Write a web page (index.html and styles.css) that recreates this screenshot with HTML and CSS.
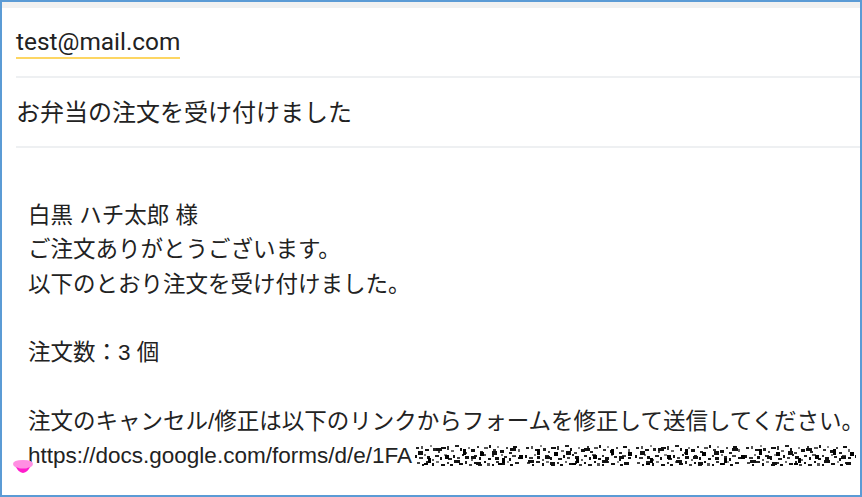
FILE: index.html
```html
<!DOCTYPE html>
<html lang="ja">
<head>
<meta charset="utf-8">
<title>お弁当の注文を受け付けました</title>
<link rel="stylesheet" href="styles.css">
</head>
<body>
<div class="frame">
  <div class="topstrip"></div>
  <div class="content">
    <div class="to-field"><span class="email">test@mail.com</span></div>
    <div class="divider"></div>
    <div class="subject">お弁当の注文を受け付けました</div>
    <div class="divider"></div>
    <div class="body">
      <div class="line">白黒 ハチ太郎 様</div>
      <div class="line">ご注文ありがとうございます。</div>
      <div class="line">以下のとおり注文を受け付けました。</div>
      <div class="line">&nbsp;</div>
      <div class="line">注文数：3 個</div>
      <div class="line">&nbsp;</div>
      <div class="line">注文のキャンセル/修正は以下のリンクからフォームを修正して送信してください。</div>
      <div class="line">https://docs.google.com/forms/d/e/1FA<svg class="noise" width="442" height="26" viewBox="0 0 442 26">
          <defs>
            <pattern id="px" width="110" height="26" patternUnits="userSpaceOnUse">
              <rect x="2" y="4" width="3" height="2" fill="#222"/><rect x="7" y="3" width="2" height="3" fill="#555"/><rect x="11" y="6" width="4" height="2" fill="#111"/><rect x="16" y="2" width="2" height="2" fill="#888"/><rect x="19" y="5" width="3" height="3" fill="#222"/><rect x="24" y="8" width="2" height="2" fill="#444"/><rect x="27" y="4" width="5" height="2" fill="#111"/><rect x="33" y="3" width="2" height="4" fill="#333"/><rect x="37" y="7" width="3" height="2" fill="#666"/><rect x="41" y="2" width="4" height="2" fill="#222"/><rect x="46" y="5" width="2" height="3" fill="#111"/><rect x="50" y="9" width="3" height="2" fill="#444"/><rect x="54" y="4" width="2" height="2" fill="#777"/><rect x="57" y="6" width="4" height="3" fill="#111"/><rect x="63" y="3" width="2" height="2" fill="#333"/><rect x="66" y="8" width="3" height="2" fill="#222"/><rect x="70" y="4" width="4" height="2" fill="#555"/><rect x="75" y="2" width="2" height="3" fill="#111"/><rect x="79" y="6" width="3" height="2" fill="#333"/><rect x="83" y="3" width="2" height="2" fill="#888"/><rect x="86" y="7" width="4" height="3" fill="#111"/><rect x="92" y="4" width="2" height="2" fill="#444"/><rect x="95" y="9" width="3" height="2" fill="#222"/><rect x="99" y="3" width="4" height="2" fill="#111"/><rect x="104" y="6" width="2" height="3" fill="#666"/>
              <rect x="1" y="12" width="2" height="3" fill="#111"/><rect x="5" y="14" width="4" height="2" fill="#333"/><rect x="10" y="11" width="2" height="2" fill="#777"/><rect x="13" y="13" width="3" height="3" fill="#111"/><rect x="18" y="16" width="2" height="2" fill="#555"/><rect x="21" y="12" width="4" height="2" fill="#222"/><rect x="26" y="14" width="2" height="3" fill="#111"/><rect x="30" y="11" width="3" height="2" fill="#888"/><rect x="34" y="15" width="4" height="2" fill="#222"/><rect x="39" y="12" width="2" height="3" fill="#111"/><rect x="43" y="14" width="3" height="2" fill="#444"/><rect x="48" y="11" width="2" height="2" fill="#222"/><rect x="51" y="13" width="4" height="3" fill="#111"/><rect x="57" y="16" width="2" height="2" fill="#666"/><rect x="60" y="12" width="3" height="2" fill="#222"/><rect x="65" y="14" width="2" height="3" fill="#111"/><rect x="68" y="11" width="4" height="2" fill="#555"/><rect x="74" y="15" width="3" height="2" fill="#111"/><rect x="78" y="12" width="2" height="2" fill="#333"/><rect x="81" y="14" width="4" height="3" fill="#111"/><rect x="87" y="11" width="2" height="2" fill="#777"/><rect x="90" y="13" width="3" height="2" fill="#222"/><rect x="95" y="15" width="2" height="3" fill="#111"/><rect x="98" y="12" width="4" height="2" fill="#444"/><rect x="104" y="14" width="3" height="2" fill="#111"/>
              <rect x="3" y="19" width="3" height="2" fill="#444"/><rect x="8" y="21" width="2" height="2" fill="#111"/><rect x="12" y="18" width="4" height="2" fill="#222"/><rect x="18" y="20" width="2" height="3" fill="#111"/><rect x="22" y="18" width="3" height="2" fill="#777"/><rect x="27" y="21" width="4" height="2" fill="#111"/><rect x="33" y="19" width="2" height="2" fill="#333"/><rect x="36" y="21" width="3" height="2" fill="#111"/><rect x="41" y="18" width="2" height="2" fill="#666"/><rect x="45" y="20" width="4" height="2" fill="#111"/><rect x="51" y="18" width="2" height="3" fill="#222"/><rect x="55" y="21" width="3" height="2" fill="#444"/><rect x="60" y="19" width="2" height="2" fill="#111"/><rect x="64" y="21" width="4" height="2" fill="#222"/><rect x="70" y="18" width="2" height="2" fill="#111"/><rect x="73" y="20" width="3" height="3" fill="#555"/><rect x="78" y="21" width="2" height="2" fill="#111"/><rect x="82" y="18" width="3" height="2" fill="#333"/><rect x="87" y="20" width="4" height="2" fill="#111"/><rect x="93" y="18" width="2" height="2" fill="#888"/><rect x="96" y="21" width="3" height="2" fill="#111"/><rect x="101" y="19" width="4" height="2" fill="#222"/>
            </pattern>
            <pattern id="px2" width="74" height="26" patternUnits="userSpaceOnUse">
              <rect x="4" y="8" width="5" height="4" fill="#111"/><rect x="14" y="15" width="3" height="5" fill="#000"/><rect x="22" y="5" width="6" height="3" fill="#111"/><rect x="31" y="12" width="4" height="4" fill="#000"/><rect x="40" y="17" width="6" height="3" fill="#111"/><rect x="49" y="6" width="3" height="6" fill="#000"/><rect x="57" y="13" width="5" height="3" fill="#111"/><rect x="66" y="9" width="4" height="4" fill="#000"/><rect x="10" y="20" width="4" height="2" fill="#000"/><rect x="62" y="19" width="5" height="3" fill="#111"/>
            </pattern>
          </defs>
          <rect x="0" y="0" width="442" height="26" fill="url(#px)"/>
          <rect x="0" y="0" width="442" height="26" fill="url(#px2)"/>
        </svg></div>
    </div>
  </div>
  <svg class="marker" width="22" height="16" viewBox="0 0 22 16">
    <path d="M1 5 Q1 1 11 1 Q21 1 21 5 Q21 9 11 10 Q1 9 1 5 Z" fill="#ff8fe2"/>
    <path d="M4 8 Q11 11 18 8 Q16 13 11 14 Q6 13 4 8 Z" fill="#ff1ccc"/>
  </svg>
</div>
</body>
</html>
```
FILE: styles.css
```css
html, body {
  margin: 0;
  padding: 0;
  background: #ffffff;
}

.frame {
  position: relative;
  box-sizing: border-box;
  width: 862px;
  height: 497px;
  border: 2px solid #5b9bd5;
  background: #ffffff;
  overflow: hidden;
}

.topstrip {
  height: 6px;
  background: #f1f1f1;
}

.content {
  padding-left: 14px;
}

.to-field {
  padding-top: 20px;
  padding-bottom: 17px;
  display: flex;
}

.email {
  font-family: Roboto, "Liberation Sans", sans-serif;
  font-size: 24.4px;
  line-height: 28px;
  color: #222222;
  padding-bottom: 1px;
  border-bottom: 2px solid #fdd663;
}

.divider {
  height: 2px;
  background: #eef0f2;
}

.subject {
  font-family: "Noto Sans CJK JP", sans-serif;
  font-size: 24px;
  line-height: 34px;
  color: #222222;
  padding-top: 16px;
  padding-bottom: 18px;
}

.body {
  padding-top: 51px;
  padding-left: 12px;
  font-family: "Liberation Sans", "Noto Sans CJK JP", sans-serif;
  font-size: 22.5px;
  line-height: 34.3px;
  color: #222222;
}

.line {
  white-space: nowrap;
}

.noise {
  display: inline-block;
  vertical-align: -6px;
  margin-left: 2px;
}

.marker {
  position: absolute;
  left: 10px;
  top: 457px;
}
```
